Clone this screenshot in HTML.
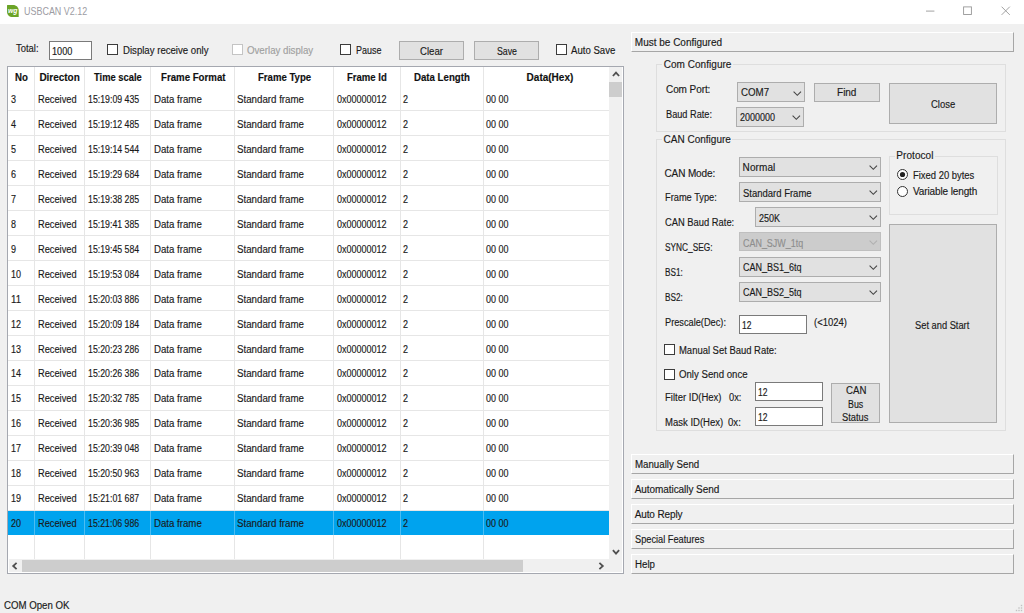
<!DOCTYPE html>
<html><head><meta charset="utf-8"><title>USBCAN V2.12</title>
<style>
html,body{margin:0;padding:0}
body{width:1024px;height:613px;position:relative;overflow:hidden;background:#f0f0f0;font-family:"Liberation Sans", sans-serif;font-size:10px;color:#1a1a1a}
body>div,body>svg,body>span{position:absolute;display:block}
span{white-space:pre;line-height:14px;height:14px;transform-origin:0 50%;-webkit-text-stroke:0.15px}
b{font-weight:bold}
</style></head>
<body>
<div style="left:0px;top:0px;width:1024px;height:24px;background:#fff;"></div>
<svg style="left:6.9px;top:4.8px" width="11.7" height="12" viewBox="0 0 11.7 12"><path d="M0 0.4 Q0 0 0.4 0 H6 C9.4 0 11.7 2.4 11.7 5.6 V12 H5.6 C2.2 12 0 9.6 0 6.4 Z" fill="#6ba427"/><text x="0.9" y="8.2" font-family="Liberation Sans, sans-serif" font-size="7.2" font-weight="bold" font-style="italic" fill="#fff" textLength="9.4" lengthAdjust="spacingAndGlyphs">wg</text></svg>
<svg style="left:920px;top:0" width="104" height="24" viewBox="0 0 104 24"><g stroke="#979797" stroke-width="0.9" fill="none"><path d="M6 11.1 H14.4"/><rect x="43.6" y="6.9" width="7.8" height="7.6"/><path d="M81.6 6.7 L89.8 14.9 M89.8 6.7 L81.6 14.9"/></g></svg>
<div style="left:49px;top:40.5px;width:42.5px;height:19px;background:#fff;border:1px solid #7a7a7a;box-sizing:border-box;"></div>
<div style="left:107px;top:44px;width:11px;height:11px;background:#fff;border:1px solid #3c3c3c;box-sizing:border-box;"></div>
<div style="left:232px;top:44px;width:11px;height:11px;background:#fff;border:1px solid #c4c4c4;box-sizing:border-box;"></div>
<div style="left:340px;top:44px;width:11px;height:11px;background:#fff;border:1px solid #3c3c3c;box-sizing:border-box;"></div>
<div style="left:399px;top:41.3px;width:65px;height:18.5px;background:#e1e1e1;border:1px solid #adadad;box-sizing:border-box;"></div>
<div style="left:474px;top:41.3px;width:65px;height:18.5px;background:#e1e1e1;border:1px solid #adadad;box-sizing:border-box;"></div>
<div style="left:556px;top:44px;width:11px;height:11px;background:#fff;border:1px solid #3c3c3c;box-sizing:border-box;"></div>
<div style="left:7px;top:65.5px;width:616.5px;height:508px;background:#fff;border:1.5px solid #a5a8b0;box-sizing:border-box;"></div>
<div style="left:34px;top:67px;width:1px;height:492.3px;background:#e6e6e6;"></div>
<div style="left:84px;top:67px;width:1px;height:492.3px;background:#e6e6e6;"></div>
<div style="left:150px;top:67px;width:1px;height:492.3px;background:#e6e6e6;"></div>
<div style="left:233.5px;top:67px;width:1px;height:492.3px;background:#e6e6e6;"></div>
<div style="left:333.3px;top:67px;width:1px;height:492.3px;background:#e6e6e6;"></div>
<div style="left:400.3px;top:67px;width:1px;height:492.3px;background:#e6e6e6;"></div>
<div style="left:483px;top:67px;width:1px;height:492.3px;background:#e6e6e6;"></div>
<div style="left:8px;top:110.3px;width:600.8px;height:1px;background:#e6e6e6;"></div>
<div style="left:8px;top:135.25px;width:600.8px;height:1px;background:#e6e6e6;"></div>
<div style="left:8px;top:160.2px;width:600.8px;height:1px;background:#e6e6e6;"></div>
<div style="left:8px;top:185.15px;width:600.8px;height:1px;background:#e6e6e6;"></div>
<div style="left:8px;top:210.1px;width:600.8px;height:1px;background:#e6e6e6;"></div>
<div style="left:8px;top:235.05px;width:600.8px;height:1px;background:#e6e6e6;"></div>
<div style="left:8px;top:260.0px;width:600.8px;height:1px;background:#e6e6e6;"></div>
<div style="left:8px;top:284.95px;width:600.8px;height:1px;background:#e6e6e6;"></div>
<div style="left:8px;top:309.9px;width:600.8px;height:1px;background:#e6e6e6;"></div>
<div style="left:8px;top:334.85px;width:600.8px;height:1px;background:#e6e6e6;"></div>
<div style="left:8px;top:359.8px;width:600.8px;height:1px;background:#e6e6e6;"></div>
<div style="left:8px;top:384.75px;width:600.8px;height:1px;background:#e6e6e6;"></div>
<div style="left:8px;top:409.7px;width:600.8px;height:1px;background:#e6e6e6;"></div>
<div style="left:8px;top:434.65px;width:600.8px;height:1px;background:#e6e6e6;"></div>
<div style="left:8px;top:459.6px;width:600.8px;height:1px;background:#e6e6e6;"></div>
<div style="left:8px;top:484.55px;width:600.8px;height:1px;background:#e6e6e6;"></div>
<div style="left:8px;top:509.5px;width:600.8px;height:1px;background:#e6e6e6;"></div>
<div style="left:8px;top:510.65px;width:600.5px;height:23.9px;background:#00a3ee;"></div>
<div style="left:34px;top:510.65px;width:1px;height:23.9px;background:#4cbdf2;"></div>
<div style="left:84px;top:510.65px;width:1px;height:23.9px;background:#4cbdf2;"></div>
<div style="left:150px;top:510.65px;width:1px;height:23.9px;background:#4cbdf2;"></div>
<div style="left:233.5px;top:510.65px;width:1px;height:23.9px;background:#4cbdf2;"></div>
<div style="left:333.3px;top:510.65px;width:1px;height:23.9px;background:#4cbdf2;"></div>
<div style="left:400.3px;top:510.65px;width:1px;height:23.9px;background:#4cbdf2;"></div>
<div style="left:483px;top:510.65px;width:1px;height:23.9px;background:#4cbdf2;"></div>
<div style="left:609px;top:67px;width:13px;height:492.3px;background:#f0f0f0;"></div>
<div style="left:609.3px;top:82.4px;width:12.4px;height:14.5px;background:#cdcdcd;"></div>
<div style="left:8.5px;top:559.3px;width:613.5px;height:13px;background:#f0f0f0;"></div>
<div style="left:22.4px;top:560px;width:500.5px;height:11.8px;background:#cdcdcd;"></div>
<svg style="left:608.5px;top:67px" width="14" height="14" viewBox="0 0 14 14"><path d="M3.9 9 L7 5.6 L10.1 9" fill="none" stroke="#505050" stroke-width="1.8"/></svg>
<svg style="left:608.5px;top:545.4px" width="14" height="14" viewBox="0 0 14 14"><path d="M3.9 5.2 L7 8.6 L10.1 5.2" fill="none" stroke="#505050" stroke-width="1.8"/></svg>
<svg style="left:8.3px;top:559px" width="14" height="14" viewBox="0 0 14 14"><path d="M8.6 3.9 L5.2 7 L8.6 10.1" fill="none" stroke="#505050" stroke-width="1.8"/></svg>
<svg style="left:594.4px;top:559px" width="14" height="14" viewBox="0 0 14 14"><path d="M5.4 3.9 L8.8 7 L5.4 10.1" fill="none" stroke="#505050" stroke-width="1.8"/></svg>
<div style="left:630.5px;top:32.2px;width:383.6px;height:19.9px;background:#f0f0f0;border-top:1px solid #fff;border-left:1px solid #fff;border-right:1px solid #a6a6a6;border-bottom:1px solid #a6a6a6;box-sizing:border-box;"></div>
<div style="left:630.5px;top:454px;width:383.6px;height:19.9px;background:#f0f0f0;border-top:1px solid #fff;border-left:1px solid #fff;border-right:1px solid #a6a6a6;border-bottom:1px solid #a6a6a6;box-sizing:border-box;"></div>
<div style="left:630.5px;top:479px;width:383.6px;height:19.9px;background:#f0f0f0;border-top:1px solid #fff;border-left:1px solid #fff;border-right:1px solid #a6a6a6;border-bottom:1px solid #a6a6a6;box-sizing:border-box;"></div>
<div style="left:630.5px;top:504px;width:383.6px;height:19.9px;background:#f0f0f0;border-top:1px solid #fff;border-left:1px solid #fff;border-right:1px solid #a6a6a6;border-bottom:1px solid #a6a6a6;box-sizing:border-box;"></div>
<div style="left:630.5px;top:529px;width:383.6px;height:19.9px;background:#f0f0f0;border-top:1px solid #fff;border-left:1px solid #fff;border-right:1px solid #a6a6a6;border-bottom:1px solid #a6a6a6;box-sizing:border-box;"></div>
<div style="left:630.5px;top:554px;width:383.6px;height:19.9px;background:#f0f0f0;border-top:1px solid #fff;border-left:1px solid #fff;border-right:1px solid #a6a6a6;border-bottom:1px solid #a6a6a6;box-sizing:border-box;"></div>
<div style="left:656px;top:64.2px;width:350px;height:67.5px;border:1px solid #dedede;box-sizing:border-box;"></div>
<div style="left:662.2px;top:58.2px;width:70.8px;height:12px;background:#f0f0f0;"></div>
<div style="left:656px;top:139.3px;width:350px;height:292px;border:1px solid #dedede;box-sizing:border-box;"></div>
<div style="left:662.1px;top:133.3px;width:70.3px;height:12px;background:#f0f0f0;"></div>
<div style="left:888.5px;top:155.7px;width:109px;height:59px;border:1px solid #dedede;box-sizing:border-box;"></div>
<div style="left:894.8px;top:149.7px;width:40.2px;height:12px;background:#f0f0f0;"></div>
<div style="left:737px;top:82.3px;width:68px;height:19.6px;background:#e1e1e1;border:1px solid #adadad;box-sizing:border-box;"></div>
<svg style="left:793.4px;top:90.5px" width="9" height="6" viewBox="0 0 9 6"><path d="M0.6 0.6 L4.3 4.3 L8 0.6" fill="none" stroke="#444444" stroke-width="1.1"/></svg>
<div style="left:814px;top:83px;width:65.5px;height:18.5px;background:#e1e1e1;border:1px solid #adadad;box-sizing:border-box;"></div>
<div style="left:889px;top:83px;width:108px;height:40.8px;background:#e1e1e1;border:1px solid #adadad;box-sizing:border-box;"></div>
<div style="left:736px;top:107px;width:68px;height:19.6px;background:#e1e1e1;border:1px solid #adadad;box-sizing:border-box;"></div>
<svg style="left:792.4px;top:115.2px" width="9" height="6" viewBox="0 0 9 6"><path d="M0.6 0.6 L4.3 4.3 L8 0.6" fill="none" stroke="#444444" stroke-width="1.1"/></svg>
<div style="left:739px;top:157.2px;width:142px;height:19.4px;background:#e1e1e1;border:1px solid #adadad;box-sizing:border-box;"></div>
<svg style="left:869.4px;top:165.29999999999998px" width="9" height="6" viewBox="0 0 9 6"><path d="M0.6 0.6 L4.3 4.3 L8 0.6" fill="none" stroke="#444444" stroke-width="1.1"/></svg>
<div style="left:739px;top:182.2px;width:142px;height:19.4px;background:#e1e1e1;border:1px solid #adadad;box-sizing:border-box;"></div>
<svg style="left:869.4px;top:190.29999999999998px" width="9" height="6" viewBox="0 0 9 6"><path d="M0.6 0.6 L4.3 4.3 L8 0.6" fill="none" stroke="#444444" stroke-width="1.1"/></svg>
<div style="left:755.4px;top:207.3px;width:125.6px;height:19.3px;background:#e1e1e1;border:1px solid #adadad;box-sizing:border-box;"></div>
<svg style="left:869.4px;top:215.35000000000002px" width="9" height="6" viewBox="0 0 9 6"><path d="M0.6 0.6 L4.3 4.3 L8 0.6" fill="none" stroke="#444444" stroke-width="1.1"/></svg>
<div style="left:739px;top:232.2px;width:142px;height:19.3px;background:#cccccc;border:1px solid #bfbfbf;box-sizing:border-box;"></div>
<svg style="left:869.4px;top:240.25px" width="9" height="6" viewBox="0 0 9 6"><path d="M0.6 0.6 L4.3 4.3 L8 0.6" fill="none" stroke="#b0b0b0" stroke-width="1.1"/></svg>
<div style="left:739px;top:257.2px;width:142px;height:19.4px;background:#e1e1e1;border:1px solid #adadad;box-sizing:border-box;"></div>
<svg style="left:869.4px;top:265.29999999999995px" width="9" height="6" viewBox="0 0 9 6"><path d="M0.6 0.6 L4.3 4.3 L8 0.6" fill="none" stroke="#444444" stroke-width="1.1"/></svg>
<div style="left:739px;top:282.2px;width:142px;height:19.4px;background:#e1e1e1;border:1px solid #adadad;box-sizing:border-box;"></div>
<svg style="left:869.4px;top:290.29999999999995px" width="9" height="6" viewBox="0 0 9 6"><path d="M0.6 0.6 L4.3 4.3 L8 0.6" fill="none" stroke="#444444" stroke-width="1.1"/></svg>
<svg style="left:895.8px;top:167.7px" width="13" height="13" viewBox="0 0 13 13"><circle cx="6.5" cy="6.5" r="5" fill="#fff" stroke="#333" stroke-width="1"/><circle cx="6.5" cy="6.5" r="2.6" fill="#222"/></svg>
<svg style="left:895.8px;top:184.5px" width="13" height="13" viewBox="0 0 13 13"><circle cx="6.5" cy="6.5" r="5" fill="#fff" stroke="#333" stroke-width="1"/></svg>
<div style="left:889px;top:224.3px;width:108px;height:198.7px;background:#e1e1e1;border:1px solid #adadad;box-sizing:border-box;"></div>
<div style="left:739px;top:315px;width:67.5px;height:19.4px;background:#fff;border:1px solid #7a7a7a;box-sizing:border-box;"></div>
<div style="left:664px;top:343.6px;width:11px;height:11px;background:#fff;border:1px solid #3c3c3c;box-sizing:border-box;"></div>
<div style="left:664px;top:368.6px;width:11px;height:11px;background:#fff;border:1px solid #3c3c3c;box-sizing:border-box;"></div>
<div style="left:755.3px;top:382px;width:68px;height:18.8px;background:#fff;border:1px solid #7a7a7a;box-sizing:border-box;"></div>
<div style="left:755.3px;top:407px;width:68px;height:18.8px;background:#fff;border:1px solid #7a7a7a;box-sizing:border-box;"></div>
<div style="left:831px;top:382.7px;width:49px;height:40.6px;background:#e1e1e1;border:1px solid #adadad;box-sizing:border-box;"></div>
<svg style="left:1012px;top:601px" width="12" height="12" viewBox="0 0 12 12"><g fill="#c2c2c2"><rect x="8.8" y="3.8" width="1.4" height="1.4"/><rect x="6.3" y="6.3" width="1.4" height="1.4"/><rect x="8.8" y="6.3" width="1.4" height="1.4"/><rect x="3.8" y="8.8" width="1.4" height="1.4"/><rect x="6.3" y="8.8" width="1.4" height="1.4"/><rect x="8.8" y="8.8" width="1.4" height="1.4"/></g></svg>
<span style="left:23.8px;top:4.5px;font-size:10.2px;color:#9c9ca3;-webkit-text-stroke:0;transform:scaleX(0.879);">USBCAN V2.12</span>
<span style="left:16.1px;top:42px;transform:scaleX(0.945);">Total:</span>
<span style="left:51.6px;top:45px;transform:scaleX(0.912);">1000</span>
<span style="left:123px;top:44px;transform:scaleX(0.961);">Display receive only</span>
<span style="left:247px;top:44px;color:#a0a0a0;transform:scaleX(0.968);">Overlay display</span>
<span style="left:355.5px;top:44px;transform:scaleX(0.896);">Pause</span>
<span style="left:419.8px;top:45.3px;transform:scaleX(0.962);">Clear</span>
<span style="left:496.6px;top:45.3px;transform:scaleX(0.877);">Save</span>
<span style="left:571.2px;top:44.1px;transform:scaleX(0.960);">Auto Save</span>
<span style="left:15.2px;top:70.6px;font-weight:bold;color:#111;transform:scaleX(0.967);">No</span>
<span style="left:39.4px;top:70.6px;font-weight:bold;color:#111;letter-spacing:-0.03px;">Directon</span>
<span style="left:94.2px;top:70.6px;font-weight:bold;color:#111;transform:scaleX(0.936);">Time scale</span>
<span style="left:160.6px;top:70.6px;font-weight:bold;color:#111;transform:scaleX(0.967);">Frame Format</span>
<span style="left:257.9px;top:70.6px;font-weight:bold;color:#111;transform:scaleX(0.959);">Frame Type</span>
<span style="left:347.2px;top:70.6px;font-weight:bold;color:#111;transform:scaleX(0.955);">Frame Id</span>
<span style="left:414.4px;top:70.6px;font-weight:bold;color:#111;transform:scaleX(0.966);">Data Length</span>
<span style="left:526.6px;top:70.6px;font-weight:bold;color:#111;">Data(Hex)</span>
<span style="left:10.9px;top:93.0px;transform:scaleX(0.899);">3</span>
<span style="left:37.5px;top:93.0px;transform:scaleX(0.926);">Received</span>
<span style="left:87.8px;top:93.0px;transform:scaleX(0.877);">15:19:09 435</span>
<span style="left:154.2px;top:93.0px;transform:scaleX(0.966);">Data frame</span>
<span style="left:237.2px;top:93.0px;transform:scaleX(0.972);">Standard frame</span>
<span style="left:337px;top:93.0px;transform:scaleX(0.901);">0x00000012</span>
<span style="left:403.2px;top:93.0px;transform:scaleX(0.899);">2</span>
<span style="left:486.3px;top:93.0px;transform:scaleX(0.895);">00 00</span>
<span style="left:10.9px;top:117.95px;transform:scaleX(0.899);">4</span>
<span style="left:37.5px;top:117.95px;transform:scaleX(0.926);">Received</span>
<span style="left:87.8px;top:117.95px;transform:scaleX(0.877);">15:19:12 485</span>
<span style="left:154.2px;top:117.95px;transform:scaleX(0.966);">Data frame</span>
<span style="left:237.2px;top:117.95px;transform:scaleX(0.972);">Standard frame</span>
<span style="left:337px;top:117.95px;transform:scaleX(0.901);">0x00000012</span>
<span style="left:403.2px;top:117.95px;transform:scaleX(0.899);">2</span>
<span style="left:486.3px;top:117.95px;transform:scaleX(0.895);">00 00</span>
<span style="left:10.9px;top:142.9px;transform:scaleX(0.899);">5</span>
<span style="left:37.5px;top:142.9px;transform:scaleX(0.926);">Received</span>
<span style="left:87.8px;top:142.9px;transform:scaleX(0.877);">15:19:14 544</span>
<span style="left:154.2px;top:142.9px;transform:scaleX(0.966);">Data frame</span>
<span style="left:237.2px;top:142.9px;transform:scaleX(0.972);">Standard frame</span>
<span style="left:337px;top:142.9px;transform:scaleX(0.901);">0x00000012</span>
<span style="left:403.2px;top:142.9px;transform:scaleX(0.899);">2</span>
<span style="left:486.3px;top:142.9px;transform:scaleX(0.895);">00 00</span>
<span style="left:10.9px;top:167.85px;transform:scaleX(0.899);">6</span>
<span style="left:37.5px;top:167.85px;transform:scaleX(0.926);">Received</span>
<span style="left:87.8px;top:167.85px;transform:scaleX(0.877);">15:19:29 684</span>
<span style="left:154.2px;top:167.85px;transform:scaleX(0.966);">Data frame</span>
<span style="left:237.2px;top:167.85px;transform:scaleX(0.972);">Standard frame</span>
<span style="left:337px;top:167.85px;transform:scaleX(0.901);">0x00000012</span>
<span style="left:403.2px;top:167.85px;transform:scaleX(0.899);">2</span>
<span style="left:486.3px;top:167.85px;transform:scaleX(0.895);">00 00</span>
<span style="left:10.9px;top:192.8px;transform:scaleX(0.899);">7</span>
<span style="left:37.5px;top:192.8px;transform:scaleX(0.926);">Received</span>
<span style="left:87.8px;top:192.8px;transform:scaleX(0.877);">15:19:38 285</span>
<span style="left:154.2px;top:192.8px;transform:scaleX(0.966);">Data frame</span>
<span style="left:237.2px;top:192.8px;transform:scaleX(0.972);">Standard frame</span>
<span style="left:337px;top:192.8px;transform:scaleX(0.901);">0x00000012</span>
<span style="left:403.2px;top:192.8px;transform:scaleX(0.899);">2</span>
<span style="left:486.3px;top:192.8px;transform:scaleX(0.895);">00 00</span>
<span style="left:10.9px;top:217.75px;transform:scaleX(0.899);">8</span>
<span style="left:37.5px;top:217.75px;transform:scaleX(0.926);">Received</span>
<span style="left:87.8px;top:217.75px;transform:scaleX(0.877);">15:19:41 385</span>
<span style="left:154.2px;top:217.75px;transform:scaleX(0.966);">Data frame</span>
<span style="left:237.2px;top:217.75px;transform:scaleX(0.972);">Standard frame</span>
<span style="left:337px;top:217.75px;transform:scaleX(0.901);">0x00000012</span>
<span style="left:403.2px;top:217.75px;transform:scaleX(0.899);">2</span>
<span style="left:486.3px;top:217.75px;transform:scaleX(0.895);">00 00</span>
<span style="left:10.9px;top:242.7px;transform:scaleX(0.899);">9</span>
<span style="left:37.5px;top:242.7px;transform:scaleX(0.926);">Received</span>
<span style="left:87.8px;top:242.7px;transform:scaleX(0.877);">15:19:45 584</span>
<span style="left:154.2px;top:242.7px;transform:scaleX(0.966);">Data frame</span>
<span style="left:237.2px;top:242.7px;transform:scaleX(0.972);">Standard frame</span>
<span style="left:337px;top:242.7px;transform:scaleX(0.901);">0x00000012</span>
<span style="left:403.2px;top:242.7px;transform:scaleX(0.899);">2</span>
<span style="left:486.3px;top:242.7px;transform:scaleX(0.895);">00 00</span>
<span style="left:10.9px;top:267.65px;transform:scaleX(0.899);">10</span>
<span style="left:37.5px;top:267.65px;transform:scaleX(0.926);">Received</span>
<span style="left:87.8px;top:267.65px;transform:scaleX(0.877);">15:19:53 084</span>
<span style="left:154.2px;top:267.65px;transform:scaleX(0.966);">Data frame</span>
<span style="left:237.2px;top:267.65px;transform:scaleX(0.972);">Standard frame</span>
<span style="left:337px;top:267.65px;transform:scaleX(0.901);">0x00000012</span>
<span style="left:403.2px;top:267.65px;transform:scaleX(0.899);">2</span>
<span style="left:486.3px;top:267.65px;transform:scaleX(0.895);">00 00</span>
<span style="left:10.9px;top:292.6px;transform:scaleX(0.962);">11</span>
<span style="left:37.5px;top:292.6px;transform:scaleX(0.926);">Received</span>
<span style="left:87.8px;top:292.6px;transform:scaleX(0.877);">15:20:03 886</span>
<span style="left:154.2px;top:292.6px;transform:scaleX(0.966);">Data frame</span>
<span style="left:237.2px;top:292.6px;transform:scaleX(0.972);">Standard frame</span>
<span style="left:337px;top:292.6px;transform:scaleX(0.901);">0x00000012</span>
<span style="left:403.2px;top:292.6px;transform:scaleX(0.899);">2</span>
<span style="left:486.3px;top:292.6px;transform:scaleX(0.895);">00 00</span>
<span style="left:10.9px;top:317.55px;transform:scaleX(0.899);">12</span>
<span style="left:37.5px;top:317.55px;transform:scaleX(0.926);">Received</span>
<span style="left:87.8px;top:317.55px;transform:scaleX(0.877);">15:20:09 184</span>
<span style="left:154.2px;top:317.55px;transform:scaleX(0.966);">Data frame</span>
<span style="left:237.2px;top:317.55px;transform:scaleX(0.972);">Standard frame</span>
<span style="left:337px;top:317.55px;transform:scaleX(0.901);">0x00000012</span>
<span style="left:403.2px;top:317.55px;transform:scaleX(0.899);">2</span>
<span style="left:486.3px;top:317.55px;transform:scaleX(0.895);">00 00</span>
<span style="left:10.9px;top:342.5px;transform:scaleX(0.899);">13</span>
<span style="left:37.5px;top:342.5px;transform:scaleX(0.926);">Received</span>
<span style="left:87.8px;top:342.5px;transform:scaleX(0.877);">15:20:23 286</span>
<span style="left:154.2px;top:342.5px;transform:scaleX(0.966);">Data frame</span>
<span style="left:237.2px;top:342.5px;transform:scaleX(0.972);">Standard frame</span>
<span style="left:337px;top:342.5px;transform:scaleX(0.901);">0x00000012</span>
<span style="left:403.2px;top:342.5px;transform:scaleX(0.899);">2</span>
<span style="left:486.3px;top:342.5px;transform:scaleX(0.895);">00 00</span>
<span style="left:10.9px;top:367.45px;transform:scaleX(0.899);">14</span>
<span style="left:37.5px;top:367.45px;transform:scaleX(0.926);">Received</span>
<span style="left:87.8px;top:367.45px;transform:scaleX(0.877);">15:20:26 386</span>
<span style="left:154.2px;top:367.45px;transform:scaleX(0.966);">Data frame</span>
<span style="left:237.2px;top:367.45px;transform:scaleX(0.972);">Standard frame</span>
<span style="left:337px;top:367.45px;transform:scaleX(0.901);">0x00000012</span>
<span style="left:403.2px;top:367.45px;transform:scaleX(0.899);">2</span>
<span style="left:486.3px;top:367.45px;transform:scaleX(0.895);">00 00</span>
<span style="left:10.9px;top:392.4px;transform:scaleX(0.899);">15</span>
<span style="left:37.5px;top:392.4px;transform:scaleX(0.926);">Received</span>
<span style="left:87.8px;top:392.4px;transform:scaleX(0.877);">15:20:32 785</span>
<span style="left:154.2px;top:392.4px;transform:scaleX(0.966);">Data frame</span>
<span style="left:237.2px;top:392.4px;transform:scaleX(0.972);">Standard frame</span>
<span style="left:337px;top:392.4px;transform:scaleX(0.901);">0x00000012</span>
<span style="left:403.2px;top:392.4px;transform:scaleX(0.899);">2</span>
<span style="left:486.3px;top:392.4px;transform:scaleX(0.895);">00 00</span>
<span style="left:10.9px;top:417.35px;transform:scaleX(0.899);">16</span>
<span style="left:37.5px;top:417.35px;transform:scaleX(0.926);">Received</span>
<span style="left:87.8px;top:417.35px;transform:scaleX(0.877);">15:20:36 985</span>
<span style="left:154.2px;top:417.35px;transform:scaleX(0.966);">Data frame</span>
<span style="left:237.2px;top:417.35px;transform:scaleX(0.972);">Standard frame</span>
<span style="left:337px;top:417.35px;transform:scaleX(0.901);">0x00000012</span>
<span style="left:403.2px;top:417.35px;transform:scaleX(0.899);">2</span>
<span style="left:486.3px;top:417.35px;transform:scaleX(0.895);">00 00</span>
<span style="left:10.9px;top:442.3px;transform:scaleX(0.899);">17</span>
<span style="left:37.5px;top:442.3px;transform:scaleX(0.926);">Received</span>
<span style="left:87.8px;top:442.3px;transform:scaleX(0.877);">15:20:39 048</span>
<span style="left:154.2px;top:442.3px;transform:scaleX(0.966);">Data frame</span>
<span style="left:237.2px;top:442.3px;transform:scaleX(0.972);">Standard frame</span>
<span style="left:337px;top:442.3px;transform:scaleX(0.901);">0x00000012</span>
<span style="left:403.2px;top:442.3px;transform:scaleX(0.899);">2</span>
<span style="left:486.3px;top:442.3px;transform:scaleX(0.895);">00 00</span>
<span style="left:10.9px;top:467.25px;transform:scaleX(0.899);">18</span>
<span style="left:37.5px;top:467.25px;transform:scaleX(0.926);">Received</span>
<span style="left:87.8px;top:467.25px;transform:scaleX(0.877);">15:20:50 963</span>
<span style="left:154.2px;top:467.25px;transform:scaleX(0.966);">Data frame</span>
<span style="left:237.2px;top:467.25px;transform:scaleX(0.972);">Standard frame</span>
<span style="left:337px;top:467.25px;transform:scaleX(0.901);">0x00000012</span>
<span style="left:403.2px;top:467.25px;transform:scaleX(0.899);">2</span>
<span style="left:486.3px;top:467.25px;transform:scaleX(0.895);">00 00</span>
<span style="left:10.9px;top:492.2px;transform:scaleX(0.899);">19</span>
<span style="left:37.5px;top:492.2px;transform:scaleX(0.926);">Received</span>
<span style="left:87.8px;top:492.2px;transform:scaleX(0.877);">15:21:01 687</span>
<span style="left:154.2px;top:492.2px;transform:scaleX(0.966);">Data frame</span>
<span style="left:237.2px;top:492.2px;transform:scaleX(0.972);">Standard frame</span>
<span style="left:337px;top:492.2px;transform:scaleX(0.901);">0x00000012</span>
<span style="left:403.2px;top:492.2px;transform:scaleX(0.899);">2</span>
<span style="left:486.3px;top:492.2px;transform:scaleX(0.895);">00 00</span>
<span style="left:10.9px;top:517.15px;transform:scaleX(0.899);">20</span>
<span style="left:37.5px;top:517.15px;transform:scaleX(0.926);">Received</span>
<span style="left:87.8px;top:517.15px;transform:scaleX(0.877);">15:21:06 986</span>
<span style="left:154.2px;top:517.15px;transform:scaleX(0.966);">Data frame</span>
<span style="left:237.2px;top:517.15px;transform:scaleX(0.972);">Standard frame</span>
<span style="left:337px;top:517.15px;transform:scaleX(0.901);">0x00000012</span>
<span style="left:403.2px;top:517.15px;transform:scaleX(0.899);">2</span>
<span style="left:486.3px;top:517.15px;transform:scaleX(0.895);">00 00</span>
<span style="left:634.8px;top:36.3px;">Must be Configured</span>
<span style="left:634.7px;top:457.5px;transform:scaleX(0.970);">Manually Send</span>
<span style="left:634.7px;top:482.5px;letter-spacing:-0.06px;">Automatically Send</span>
<span style="left:634.7px;top:507.5px;letter-spacing:-0.11px;">Auto Reply</span>
<span style="left:634.7px;top:532.5px;transform:scaleX(0.923);">Special Features</span>
<span style="left:634.7px;top:557.5px;transform:scaleX(0.972);">Help</span>
<span style="left:663.7px;top:57.5px;letter-spacing:0.04px;">Com Configure</span>
<span style="left:663.6px;top:132.6px;">CAN Configure</span>
<span style="left:896.3px;top:149.0px;letter-spacing:0.06px;">Protocol</span>
<span style="left:666px;top:83.2px;letter-spacing:-0.08px;">Com Port:</span>
<span style="left:740.8px;top:86.3px;transform:scaleX(0.972);">COM7</span>
<span style="left:837.1px;top:86.2px;letter-spacing:-0.06px;">Find</span>
<span style="left:931.2px;top:98.0px;transform:scaleX(0.946);">Close</span>
<span style="left:666px;top:107.7px;transform:scaleX(0.919);">Baud Rate:</span>
<span style="left:739.8px;top:111.3px;transform:scaleX(0.899);">2000000</span>
<span style="left:664.5px;top:166.5px;letter-spacing:-0.12px;">CAN Mode:</span>
<span style="left:664.5px;top:191.3px;transform:scaleX(0.926);">Frame Type:</span>
<span style="left:664.5px;top:215.9px;transform:scaleX(0.936);">CAN Baud Rate:</span>
<span style="left:664.5px;top:241.0px;transform:scaleX(0.831);">SYNC_SEG:</span>
<span style="left:664.5px;top:265.7px;transform:scaleX(0.821);">BS1:</span>
<span style="left:664.5px;top:290.7px;transform:scaleX(0.821);">BS2:</span>
<span style="left:742.6px;top:161.4px;letter-spacing:0.09px;">Normal</span>
<span style="left:742.6px;top:186.5px;transform:scaleX(0.949);">Standard Frame</span>
<span style="left:758.5px;top:211.5px;transform:scaleX(0.903);">250K</span>
<span style="left:742.6px;top:236.7px;color:#8e8e8e;transform:scaleX(0.895);">CAN_SJW_1tq</span>
<span style="left:742.6px;top:261.4px;transform:scaleX(0.901);">CAN_BS1_6tq</span>
<span style="left:742.6px;top:286.0px;transform:scaleX(0.901);">CAN_BS2_5tq</span>
<span style="left:912.9px;top:168.5px;transform:scaleX(0.942);">Fixed 20 bytes</span>
<span style="left:912.9px;top:185.4px;letter-spacing:-0.11px;">Variable length</span>
<span style="left:915.4px;top:318.5px;transform:scaleX(0.930);">Set and Start</span>
<span style="left:664.5px;top:315.9px;transform:scaleX(0.922);">Prescale(Dec):</span>
<span style="left:742.1px;top:319.2px;transform:scaleX(0.845);">12</span>
<span style="left:814px;top:315.9px;transform:scaleX(0.944);">(&lt;1024)</span>
<span style="left:679.3px;top:343.5px;transform:scaleX(0.945);">Manual Set Baud Rate:</span>
<span style="left:679.3px;top:368.3px;transform:scaleX(0.965);">Only Send once</span>
<span style="left:664.5px;top:390.9px;transform:scaleX(0.950);">Filter ID(Hex)</span>
<span style="left:729px;top:390.9px;transform:scaleX(0.929);">0x:</span>
<span style="left:758.3px;top:385.7px;transform:scaleX(0.854);">12</span>
<span style="left:664.5px;top:415.8px;transform:scaleX(0.952);">Mask ID(Hex)</span>
<span style="left:728.4px;top:415.8px;transform:scaleX(0.959);">0x:</span>
<span style="left:758.3px;top:410.8px;transform:scaleX(0.854);">12</span>
<span style="left:845.7px;top:384.2px;transform:scaleX(0.966);">CAN</span>
<span style="left:848px;top:397.5px;transform:scaleX(0.882);">Bus</span>
<span style="left:842.2px;top:410.9px;transform:scaleX(0.934);">Status</span>
<span style="left:4.4px;top:599.4px;transform:scaleX(0.966);">COM Open OK</span>
</body></html>
